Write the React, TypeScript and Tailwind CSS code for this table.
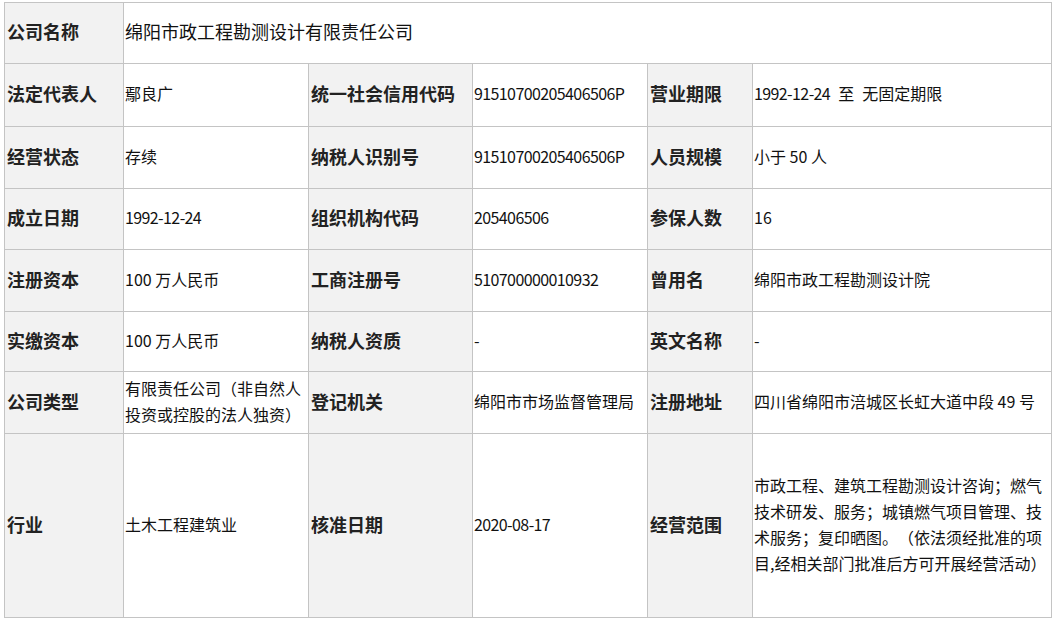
import React from "react";

const L = ({ children, className = "" }: { children: React.ReactNode; className?: string }) => (
  <div
    className={
      "bg-[#f2f2f2] flex items-center pl-[2px] pb-[4px] text-[18px] font-bold text-[#222] leading-none whitespace-nowrap " +
      className
    }
  >
    {children}
  </div>
);

const V = ({ children, className = "" }: { children: React.ReactNode; className?: string }) => (
  <div
    className={
      "bg-white flex items-center pl-[1px] pb-[4px] text-[16px] text-[#111] leading-[26px] " + className
    }
  >
    {children}
  </div>
);

const N = ({ children }: { children: React.ReactNode }) => (
  <span className="tracking-[-0.6px]">{children}</span>
);

export default function App() {
  return (
    <div
      className="w-[1056px] h-[623px] bg-white pl-[4px] pt-[2px] [text-spacing-trim:space-all]"
      style={{ fontFamily: '"Noto Sans CJK SC", "Noto Sans", sans-serif' }}
    >
      <div className="grid grid-cols-[118px_184px_163px_174px_104px_298px] grid-rows-[60px_62px_61px_60px_61px_59px_61px_183px] gap-px bg-[#c4c4c4] p-px w-[1048px]">
        <L className="pb-[2px]">公司名称</L>
        <V className="col-span-5 text-[18px] pb-[2px]">绵阳市政工程勘测设计有限责任公司</V>

        <L>法定代表人</L>
        <V>鄢良广</V>
        <L>统一社会信用代码</L>
        <V><N>91510700205406506P</N></V>
        <L>营业期限</L>
        <V><N>1992-12-24</N>{"\u2002"}至{"\u2002"}无固定期限</V>

        <L>经营状态</L>
        <V>存续</V>
        <L>纳税人识别号</L>
        <V><N>91510700205406506P</N></V>
        <L>人员规模</L>
        <V>小于 50 人</V>

        <L>成立日期</L>
        <V><N>1992-12-24</N></V>
        <L>组织机构代码</L>
        <V><N>205406506</N></V>
        <L>参保人数</L>
        <V>16</V>

        <L>注册资本</L>
        <V>100 万人民币</V>
        <L>工商注册号</L>
        <V><N>510700000010932</N></V>
        <L>曾用名</L>
        <V>绵阳市政工程勘测设计院</V>

        <L>实缴资本</L>
        <V>100 万人民币</V>
        <L>纳税人资质</L>
        <V>-</V>
        <L>英文名称</L>
        <V>-</V>

        <L>公司类型</L>
        <V className="whitespace-nowrap">
          <div>
            <div>有限责任公司（非自然人</div>
            <div>投资或控股的法人独资）</div>
          </div>
        </V>
        <L>登记机关</L>
        <V className="pl-0">绵阳市市场监督管理局</V>
        <L>注册地址</L>
        <V className="whitespace-nowrap">四川省绵阳市涪城区长虹大道中段 49 号</V>

        <L>行业</L>
        <V>土木工程建筑业</V>
        <L>核准日期</L>
        <V><N>2020-08-17</N></V>
        <L>经营范围</L>
        <V className="whitespace-nowrap">
          <div>
            <div>市政工程、建筑工程勘测设计咨询；燃气</div>
            <div>技术研发、服务；城镇燃气项目管理、技</div>
            <div>术服务；复印晒图。（依法须经批准的项</div>
            <div>目,经相关部门批准后方可开展经营活动）</div>
          </div>
        </V>
      </div>
    </div>
  );
}
